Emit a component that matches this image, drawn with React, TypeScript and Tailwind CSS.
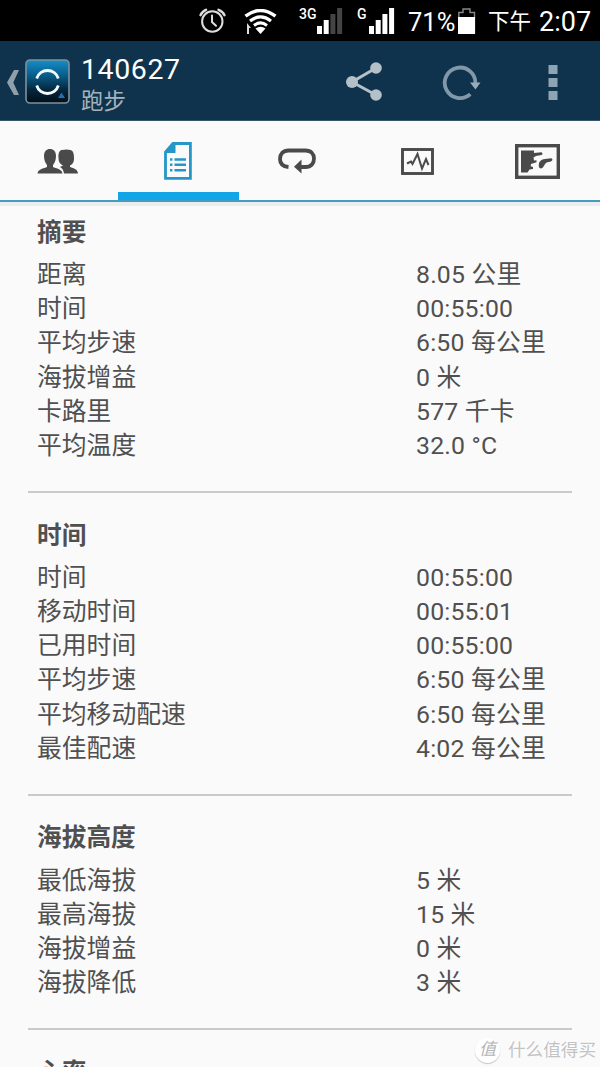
import type { FC } from 'react';

interface Row {
  label: string;
  value: string;
}

interface SectionData {
  title: string;
  rows: Row[];
}

const sections: SectionData[] = [
  {
    title: '摘要',
    rows: [
      { label: '距离', value: '8.05 公里' },
      { label: '时间', value: '00:55:00' },
      { label: '平均步速', value: '6:50 每公里' },
      { label: '海拔增益', value: '0 米' },
      { label: '卡路里', value: '577 千卡' },
      { label: '平均温度', value: '32.0 °C' },
    ],
  },
  {
    title: '时间',
    rows: [
      { label: '时间', value: '00:55:00' },
      { label: '移动时间', value: '00:55:01' },
      { label: '已用时间', value: '00:55:00' },
      { label: '平均步速', value: '6:50 每公里' },
      { label: '平均移动配速', value: '6:50 每公里' },
      { label: '最佳配速', value: '4:02 每公里' },
    ],
  },
  {
    title: '海拔高度',
    rows: [
      { label: '最低海拔', value: '5 米' },
      { label: '最高海拔', value: '15 米' },
      { label: '海拔增益', value: '0 米' },
      { label: '海拔降低', value: '3 米' },
    ],
  },
  { title: '心率', rows: [] },
];

const SignalBars: FC<{ strength: number }> = ({ strength }) => (
  <svg className="h-[26px] w-[26px] shrink-0" viewBox="0 0 26 26">
    {[8, 14, 20, 26].map((h, i) => (
      <rect key={h} x={i * 6.7} y={26 - h} width="5" height={h} fill={i < strength ? '#fff' : '#444'} />
    ))}
  </svg>
);

const StatusBar: FC = () => (
  <div className="flex h-[41px] items-start bg-black pl-[199px] text-white">
    <svg className="mt-[8px] h-[26px] w-[27px] shrink-0" viewBox="0 0 27 26" fill="none" stroke="#ddd" strokeLinecap="round">
      <circle cx="13.3" cy="13.5" r="10.2" strokeWidth="2" />
      <path d="M13 7.5v6.5l4 3.8" strokeWidth="2" />
      <path d="M1.5 7.2Q3 3.4 7 1.8M19.5 1.8Q24 3.4 25.5 7.2" strokeWidth="2.4" />
    </svg>
    <svg className="ml-[18px] mr-px mt-[9px] h-[26px] w-[34px] shrink-0" viewBox="0 0 34 26" fill="none" stroke="#fff">
      <path d="M1.5 7.2Q16.5-4.2 31.5 7.2" strokeWidth="3.4" />
      <path d="M6 12Q16.500 3.800 27 12" strokeWidth="3.2" />
      <path d="M10 16.500Q16.500 11.300 23 16.500" strokeWidth="3" />
      <path d="M11.500 19.500Q16.500 16 21.500 19.500L16.500 25z" fill="#fff" stroke="none" />
      <path d="M3 14l4 5H5v6H3z" fill="#ddd" stroke="none" />
    </svg>
    <span className="ml-[20px] mt-[6px] w-[17px] text-[14px] font-medium leading-4">3G</span>
    <div className="ml-px mt-[8px]">
      <SignalBars strength={2} />
    </div>
    <span className="ml-[14px] mt-[6px] w-[12px] text-[14px] font-medium leading-4">G</span>
    <div className="mt-[8px]">
      <SignalBars strength={4} />
    </div>
    <span className="ml-[13px] mt-[6px] w-[50px] whitespace-nowrap text-[25.5px] leading-8">71%</span>
    <svg className="mt-[8px] h-[26px] w-[18px] shrink-0" viewBox="0 0 18 26">
      <path d="M.8 25V4.5H5V1h7v3.5h4.5V25z" fill="none" stroke="#888" strokeWidth="1.4" />
      <path d="M0 9h17v17H0z" fill="#fff" />
    </svg>
    <span className="ml-[12px] mt-[6px] flex whitespace-nowrap leading-8">
      <span className="text-[21.5px]">下午</span>
      <span className="ml-[8px] text-[27px]">2:07</span>
    </span>
  </div>
);

const AppBar: FC = () => (
  <header className="flex h-[80px] items-start border-b border-[#36566c] bg-[#0f334d]">
    <svg className="ml-[7px] mt-[29px] h-[25px] w-[12px] shrink-0" viewBox="0 0 12 25">
      <path d="M7 0h5L6.3 12.5 12 25H7L0 12.5z" fill="#8fa0ac" />
    </svg>
    <svg className="ml-[6px] mt-[18px] h-[46px] w-[46px] shrink-0" viewBox="0 0 46 46" fill="none">
      <defs>
        <linearGradient id="logo" x1="0" y1="0" x2="0" y2="1">
          <stop offset="0" stopColor="#168fc9" />
          <stop offset=".35" stopColor="#0a5d8b" />
          <stop offset=".7" stopColor="#05263c" />
          <stop offset="1" stopColor="#020e18" />
        </linearGradient>
      </defs>
      <rect x="1" y="1" width="43" height="43" rx="4" fill="url(#logo)" stroke="#7e929f" strokeWidth="1.6" />
      <path d="M11.7 19.5A11.3 11.3 0 0 1 33.3 19.5M11.7 26.5A11.3 11.3 0 0 0 33.3 26.5" stroke="#f2fbff" strokeWidth="2.8" />
      <path d="M36.500 33.500l3.500 5.500h-7z" fill="#2270b4" />
    </svg>
    <div className="ml-[10px] mt-[12px] w-[120px]">
      <h1 className="text-[28.5px] leading-[34px] tracking-[0.6px] text-white">140627</h1>
      <p className="text-[22.5px] leading-[28px] text-[#a4b3be]">跑步</p>
    </div>
    <svg className="ml-[144px] mt-[20px] h-[42px] w-[40px] shrink-0" viewBox="0 0 40 42" fill="#b4c1c9" stroke="#b4c1c9">
      <path d="M31 7L7 21l24 13" fill="none" strokeWidth="3" />
      <circle cx="31" cy="7" r="5.8" stroke="none" />
      <circle cx="7" cy="21" r="6" stroke="none" />
      <circle cx="31" cy="34" r="5.8" stroke="none" />
    </svg>
    <svg className="ml-[56px] mt-[22px] h-[40px] w-[40px] shrink-0" viewBox="0 0 40 40">
      <path d="M29.300 31.200A15.300 15.300 0 1 1 34.300 21" fill="none" stroke="#8098aa" strokeWidth="3.8" />
      <path d="M29 19.500h10.500L34.500 26.500z" fill="#9aacba" />
    </svg>
    <svg className="ml-[67px] mt-[24px] h-[36px] w-[10px] shrink-0" viewBox="0 0 10 36" fill="#8da4b5">
      <path d="M.5 0h9v9h-9zM.5 13h9v9h-9zM.5 26h9v9h-9z" />
    </svg>
  </header>
);

const PeopleIcon: FC = () => (
  <svg className="mr-[4px] mt-px h-[26px] w-[42px]" viewBox="0 0 42 26" fill="#4a4a4a">
    <path d="M21.500 9C21 3.500 23 1 25 1q4.500-1 8.500 0C36.500 2 37 5 37 9c0 4-1 6-4 7.500V18c4 1.500 7.500 2 8 6.500H27c-.4-3.500-2-5.500-4-6.500l3-1.500c-3-1.500-4.500-3.500-4.500-7.500z" />
    <path d="M7 7C7 2.500 9.500 0 13 0s6 2.500 6 7c0 4-1.300 7-3 9v2c5 1.800 9 2.500 9.500 6.500H.5C1 20.500 5 19.800 10 18v-2C8.300 14 7 11 7 7z" />
  </svg>
);

const DetailsIcon: FC = () => (
  <svg className="mr-[5px] h-[38px] w-[28px]" viewBox="0 0 28 38" fill="none" stroke="#2497c8" strokeWidth="2.8">
    <path d="M9 1.5h17.4v34.8H1.5V10z" />
    <path d="M9 1.5h2.500v9.500H1.500V9z" fill="#2497c8" stroke="none" />
    <path d="M10.5 17.5H22M10.5 22.8H22M10.5 28.3H22" strokeWidth="2.4" />
    <path d="M6 17.5h2.4M6 22.8h2.4M6 28.3h2.4" strokeWidth="2.4" />
  </svg>
);

const LapsIcon: FC = () => (
  <svg className="mr-[6px] h-[26px] w-[38px]" viewBox="0 0 38 26">
    <path
      d="M10.5 19C5 18.5 2 15.5 2 11c0-5 3-8.500 8.500-8.500h17C33 2.500 36 6 36 10.500c0 5-3 8.500-8.500 8.500H22"
      fill="none"
      stroke="#4a4a4a"
      strokeWidth="3.8"
    />
    <path d="M23.500 11.500v14L16 18.800z" fill="#4a4a4a" />
  </svg>
);

const ChartIcon: FC = () => (
  <svg className="mr-[6px] h-[27px] w-[33px]" viewBox="0 0 33 27" fill="none" stroke="#4a4a4a">
    <rect x="1.5" y="1.5" width="30" height="24" strokeWidth="2.9" />
    <path d="M6 15.500l4-2 1.500 2.500 5-10L21 20.500l4-9.500 2.500 6" strokeWidth="2" />
  </svg>
);

const MapIcon: FC = () => (
  <svg className="mr-[5px] h-[35px] w-[45px]" viewBox="0 0 45 35" fill="#4a4a4a">
    <rect x="1.700" y="1.700" width="41.600" height="31.600" fill="none" stroke="#4a4a4a" strokeWidth="3.400" />
    <path d="M6 6.500h13v2.500l7.500-.8q2 1.500 0 2.800L21 12l-2.500 1.500.5 3 2.500-.3v2L16 20l-.3 2.300 2.300.6v2l-3.500.7-2 3H6z" />
    <path d="M24 23c-1-4.500 1.500-7.500 6-8l6-.7c2.500.5 1.500 3-1 3.400-4 .6-4.500 1.500-6 4-1 2.500-3.800 4-5 1.300z" />
  </svg>
);

const tabs = [PeopleIcon, DetailsIcon, LapsIcon, ChartIcon, MapIcon];
const activeTab = 1;

const TabBar: FC = () => (
  <nav className="border-b-4 border-[#e9edee]">
    <div className="grid h-[81px] grid-cols-5 border-b-2 border-[#459cbd]">
      {tabs.map((Icon, index) => (
        <button key={index} className="flex flex-col items-center">
          <span className="flex h-[71px] items-center pt-[9px]">
            <Icon />
          </span>
          {index === activeTab && <span className="-mr-px ml-[-4px] h-[8px] w-[121px] bg-[#12a5e8]" />}
        </button>
      ))}
    </div>
  </nav>
);

const Section: FC<{ section: SectionData }> = ({ section }) => (
  <section className="mx-[28px] border-b-2 border-[#cacaca] pb-[28px] pl-[9px] pt-[16.6px]">
    <h2 className="h-[51px] text-[24.7px] font-bold leading-[51px]">{section.title}</h2>
    <dl>
      {section.rows.map((row) => (
        <div key={row.label} className="flex h-[34.2px] items-center">
          <dt className="w-[379px]">{row.label}</dt>
          <dd className="tracking-[0.2px]">{row.value}</dd>
        </div>
      ))}
    </dl>
  </section>
);

const Watermark: FC = () => (
  <div className="absolute bottom-[4px] right-[4px] flex items-center gap-[8px] text-[#c3c3c3]">
    <span className="flex h-[25px] w-[25px] items-center justify-center rounded-full bg-white text-[17px] italic text-[#b4b4b4] shadow-[0_1px_1px_#c3c3c3]">
      值
    </span>
    <span className="text-[17.6px] leading-[26px] [text-shadow:-1px_-1px_0_#fff]">什么值得买</span>
  </div>
);

export default function App() {
  return (
    <div className="relative h-[1067px] w-[600px] overflow-hidden bg-[#fafafa] font-[Roboto,'Noto_Sans_CJK_SC',sans-serif]">
      <StatusBar />
      <AppBar />
      <TabBar />
      <main className="-mt-[15.6px] text-[24.8px] leading-[34px] text-[#505050]">
        {sections.map((section) => (
          <Section key={section.title} section={section} />
        ))}
      </main>
      <Watermark />
    </div>
  );
}
